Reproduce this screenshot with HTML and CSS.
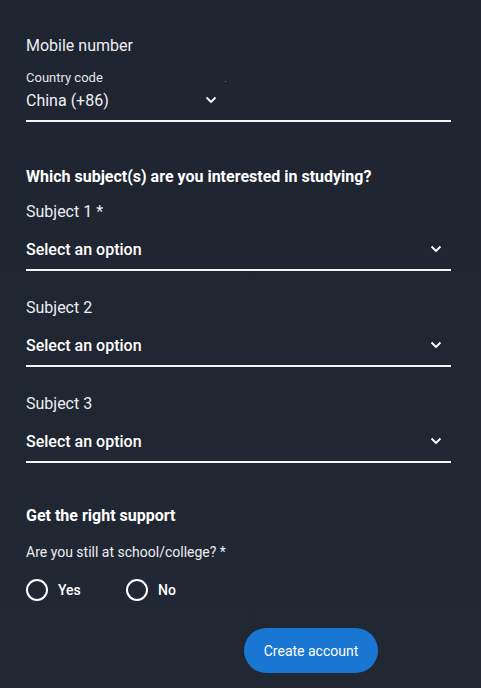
FILE: index.html
```html
<!DOCTYPE html>
<html>
<head>
<meta charset="utf-8">
<link rel="stylesheet" href="styles.css">
</head>
<body>
<form class="form">
  <div class="label-lg mobile-label">Mobile number</div>
  <div class="phone-row">
    <div class="country">
      <div class="small-label">Country code</div>
      <div class="select-line">
        <span class="value">China (+86)</span>
        <svg class="chev" width="12" height="8" viewBox="0 0 12 8"><path d="M1.5 1.5 L6 6 L10.5 1.5" fill="none" stroke="#fff" stroke-width="1.8"/></svg>
      </div>
    </div>
    <div class="number">
      <span class="dot"></span>
    </div>
  </div>

  <h3 class="heading subj-heading">Which subject(s) are you interested in studying?</h3>

  <div class="field">
    <div class="label-lg">Subject 1 *</div>
    <div class="select">
      <span class="option">Select an option</span>
      <svg class="chev" width="12" height="8" viewBox="0 0 12 8"><path d="M1.5 1.5 L6 6 L10.5 1.5" fill="none" stroke="#fff" stroke-width="1.8"/></svg>
    </div>
  </div>
  <div class="field">
    <div class="label-lg">Subject 2</div>
    <div class="select">
      <span class="option">Select an option</span>
      <svg class="chev" width="12" height="8" viewBox="0 0 12 8"><path d="M1.5 1.5 L6 6 L10.5 1.5" fill="none" stroke="#fff" stroke-width="1.8"/></svg>
    </div>
  </div>
  <div class="field">
    <div class="label-lg">Subject 3</div>
    <div class="select">
      <span class="option">Select an option</span>
      <svg class="chev" width="12" height="8" viewBox="0 0 12 8"><path d="M1.5 1.5 L6 6 L10.5 1.5" fill="none" stroke="#fff" stroke-width="1.8"/></svg>
    </div>
  </div>

  <h3 class="heading support-heading">Get the right support</h3>
  <div class="question">Are you still at school/college? *</div>
  <div class="radios">
    <label class="radio"><span class="circle"></span><span class="rlabel">Yes</span></label>
    <label class="radio"><span class="circle"></span><span class="rlabel">No</span></label>
  </div>

  <div class="actions">
    <button type="button" class="btn">Create account</button>
  </div>
</form>
</body>
</html>
```
FILE: styles.css
```css
html, body {
  margin: 0;
  padding: 0;
}
body {
  background: linear-gradient(180deg, #1e2430 0%, #212833 100%);
  font-family: Roboto, "Liberation Sans", sans-serif;
  color: #f2f3f5;
  width: 481px;
  height: 688px;
  overflow: hidden;
}
.form {
  padding: 36px 30px 0 26px;
}
.label-lg {
  font-size: 16px;
  line-height: 20px;
  color: #eceef1;
}
.mobile-label {
  margin-bottom: 15px;
}
.phone-row {
  display: flex;
}
.country {
  width: 200px;
  border-bottom: 2px solid #f5f5f5;
}
.small-label {
  font-size: 13px;
  line-height: 14px;
  color: #e4e6ea;
}
.select-line {
  display: flex;
  align-items: center;
  justify-content: space-between;
  height: 28px;
  margin-top: 1px;
  padding-right: 9px;
  padding-bottom: 6px;
}
.value {
  font-size: 16px;
  color: #f0f1f3;
}
.number {
  flex: 1;
  border-bottom: 2px solid #f5f5f5;
  position: relative;
}
.dot {
  position: absolute;
  left: -1px;
  top: 10px;
  width: 1px;
  height: 1px;
  background: #6b7280;
}
.heading {
  font-size: 16px;
  font-weight: 700;
  line-height: 20px;
  margin: 0;
  color: #ffffff;
}
.subj-heading {
  margin-top: 45px;
  margin-bottom: 15px;
}
.field {
  margin-bottom: 27px;
}
.select {
  display: flex;
  align-items: center;
  justify-content: space-between;
  border-bottom: 2px solid #f5f5f5;
  height: 40px;
  margin-top: 9px;
  padding-right: 9px;
  box-sizing: border-box;
  padding-bottom: 2px;
}
.option {
  font-size: 16px;
  font-weight: 500;
  color: #ffffff;
}
.support-heading {
  margin-top: 43px;
}
.question {
  font-size: 14px;
  margin-top: 17px;
  color: #eceef1;
  line-height: 18px;
}
.radios {
  display: flex;
  gap: 32px;
  margin-top: 18px;
}
.radio {
  display: flex;
  align-items: center;
  gap: 10px;
}
.circle {
  width: 18px;
  height: 18px;
  border: 2px solid #ffffff;
  border-radius: 50%;
}
.rlabel {
  font-size: 14px;
  font-weight: 500;
  color: #ffffff;
  width: 36px;
}
.actions {
  display: flex;
  padding-left: 218px;
  margin-top: 27px;
}
.btn {
  background: #1976d2;
  color: #ffffff;
  border: none;
  border-radius: 23px;
  width: 134px;
  height: 45px;
  font-family: Roboto, "Liberation Sans", sans-serif;
  font-size: 14px;
}
```
